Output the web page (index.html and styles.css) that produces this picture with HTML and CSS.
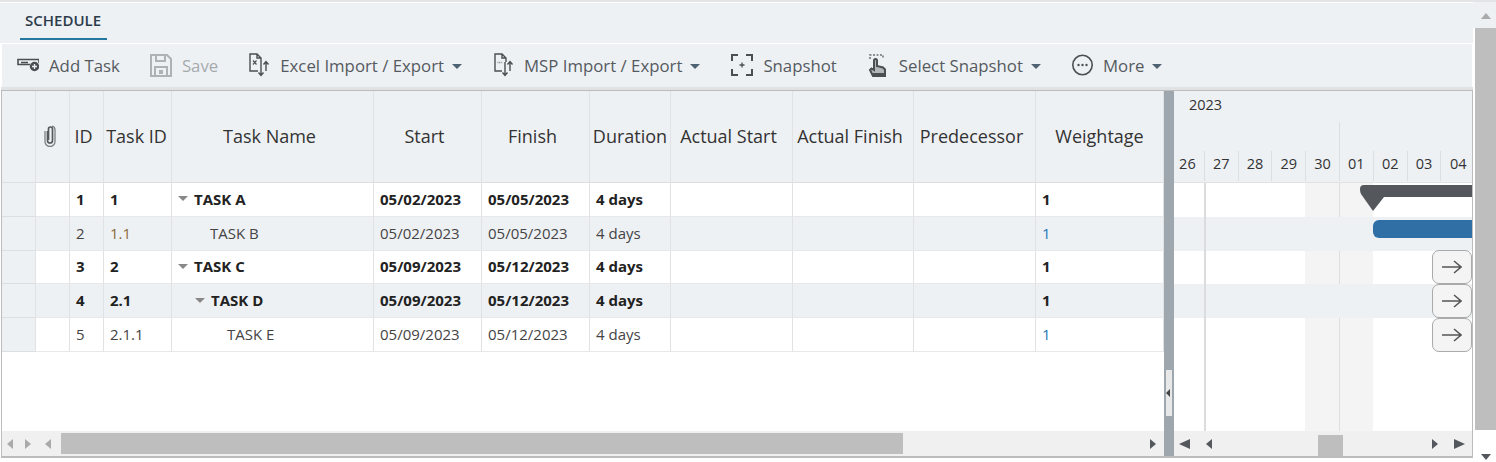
FILE: index.html
```html
<!DOCTYPE html>
<html>

<head>
  <title>Schedule</title>
  <link rel="stylesheet" href="styles.css">
</head>

<body>
  <div class="page">
    <div class="main">
      <div class="tabs"><span class="tab">SCHEDULE</span></div>

      <div class="toolbar">
        <span class="tool">
          <svg class="icon" viewBox="0 0 22 24"><path d="M13 11.500H1V6.500h21V10M4 9.500h7" fill="none" stroke="#4a4f54" stroke-width="1.600"/><circle cx="17.500" cy="13.500" r="4.700" fill="#4a4f54"/><path d="M15 13.500h5M17.500 11v5" stroke="#eef1f4" stroke-width="1.300"/></svg>
          Add Task
        </span>
        <span class="tool disabled">
          <svg class="icon" viewBox="0 0 22 24"><path d="M1 2h16l4 4v17H1z" fill="none" stroke="#aeb2b5" stroke-width="2"/><path d="M6 2v6h9V2M5 23v-9h12v9" fill="none" stroke="#aeb2b5" stroke-width="2"/><rect x="9" y="17" width="4" height="4" fill="#aeb2b5"/></svg>
          Save
        </span>
        <span class="tool">
          <svg class="icon" viewBox="0 0 22 24"><path d="M10 18H2V1h7l4 4v4M9 1v4h4" fill="none" stroke="#4a4f54" stroke-width="1.400"/><path d="M5 7.500l3.500 4M8.500 7.500L5 11.500" stroke="#4a4f54" stroke-width="1.200"/><path d="M13 9v13M10.500 19.500l2.500 3 2.500-3M18 18V9M15.500 11.500L18 8.500l2.500 3" fill="none" stroke="#4a4f54" stroke-width="1.400"/></svg>
          Excel Import / Export <i class="caret"></i>
        </span>
        <span class="tool">
          <svg class="icon" viewBox="0 0 22 24"><path d="M10 18H3V1h7l4 4v4M10 1v4h4" fill="none" stroke="#4a4f54" stroke-width="1.400"/><path d="M5.500 9.500h5" stroke="#8a8e92" stroke-width="1.600" stroke-dasharray="1 .6"/><path d="M13 9v13M10.500 19.500l2.500 3 2.500-3M18 18V9M15.500 11.500L18 8.500l2.500 3" fill="none" stroke="#4a4f54" stroke-width="1.400"/></svg>
          MSP Import / Export <i class="caret"></i>
        </span>
        <span class="tool snapshot">
          <svg class="icon" viewBox="0 0 22 24"><path d="M1 8V2h6M15 2h6v6M21 16v6h-6M7 22H1v-6" fill="none" stroke="#4a4f54" stroke-width="2"/><path d="M8.500 12h5M11 9.500v5" stroke="#4a4f54" stroke-width="1.300"/></svg>
          Snapshot
        </span>
        <span class="tool">
          <svg class="icon" viewBox="0 0 22 24"><path d="M3 6V2h13v4" fill="none" stroke="#8c9094" stroke-width="2" stroke-dasharray="2 1.500"/><path d="M5 21l-2-4 1.500-1.500L7 17V7.500a1.500 1.500 0 0 1 3 0V13l6 1.500 2 2V23H6z" fill="#b4b7ba" stroke="#4a4f54" stroke-width="2"/><path d="M6 20h12v3H6z" fill="#4a4f54"/></svg>
          Select Snapshot <i class="caret"></i>
        </span>
        <span class="tool">
          <svg class="icon" viewBox="0 0 22 24"><circle cx="11.500" cy="12" r="9.700" fill="none" stroke="#4a4f54" stroke-width="1.600"/><circle cx="7.500" cy="12" r="1.200" fill="#4a4f54"/><circle cx="11.500" cy="12" r="1.200" fill="#4a4f54"/><circle cx="15.500" cy="12" r="1.200" fill="#4a4f54"/></svg>
          More <i class="caret"></i>
        </span>
      </div>

      <div class="panes">
        <div class="left-pane">
          <div class="row head">
            <div></div>
            <div>
              <svg class="clip" viewBox="0 0 12 22"><path d="M3.500 6v9.500a2.500 2.500 0 0 0 5 0V4a2 2 0 0 0-4 0v11" fill="none" stroke="#55595d" stroke-width="1.700"/><path d="M1 6v10.500a5 5 0 0 0 10 0V4.500a3.500 3.500 0 0 0-3-3.300" fill="none" stroke="#7c8084" stroke-width="1.300"/></svg>
            </div>
            <div>ID</div>
            <div>Task ID</div>
            <div>Task Name</div>
            <div>Start</div>
            <div>Finish</div>
            <div>Duration</div>
            <div>Actual Start</div>
            <div>Actual Finish</div>
            <div>Predecessor</div>
            <div>Weightage</div>
          </div>

          <div class="row summary">
            <div class="rowhead"></div><div></div><div>1</div><div>1</div>
            <div class="name"><i class="tree"></i>TASK A</div>
            <div>05/02/2023</div><div>05/05/2023</div><div>4 days</div><div></div><div></div><div></div><div>1</div>
          </div>
          <div class="row alt">
            <div class="rowhead"></div><div></div><div>2</div><div class="wbs">1.1</div>
            <div class="name level1">TASK B</div>
            <div>05/02/2023</div><div>05/05/2023</div><div>4 days</div><div></div><div></div><div></div><div class="link">1</div>
          </div>
          <div class="row summary">
            <div class="rowhead"></div><div></div><div>3</div><div>2</div>
            <div class="name"><i class="tree"></i>TASK C</div>
            <div>05/09/2023</div><div>05/12/2023</div><div>4 days</div><div></div><div></div><div></div><div>1</div>
          </div>
          <div class="row summary alt">
            <div class="rowhead"></div><div></div><div>4</div><div>2.1</div>
            <div class="name level1-tree"><i class="tree"></i>TASK D</div>
            <div>05/09/2023</div><div>05/12/2023</div><div>4 days</div><div></div><div></div><div></div><div>1</div>
          </div>
          <div class="row">
            <div class="rowhead"></div><div></div><div>5</div><div>2.1.1</div>
            <div class="name level2">TASK E</div>
            <div>05/09/2023</div><div>05/12/2023</div><div>4 days</div><div></div><div></div><div></div><div class="link">1</div>
          </div>

          <div class="spacer"></div>

          <div class="hscroll left-scroll">
            <i class="arrow left off"></i>
            <i class="arrow right off"></i>
            <i class="arrow left off"></i>
            <span class="thumb"></span>
            <i class="arrow right"></i>
          </div>
        </div>

        <div class="splitter">
          <span class="handle"><i></i></span>
        </div>

        <div class="gantt">
          <div class="gantt-head">
            <div class="year">2023</div>
            <div class="month"></div>
            <div class="days">
              <span>26</span><span>27</span><span>28</span><span>29</span><span>30</span><span>01</span><span>02</span><span>03</span><span>04</span>
            </div>
          </div>

          <div class="gantt-body">
            <div class="weekend"></div>
            <div class="gantt-row"></div>
            <div class="gantt-row alt"></div>
            <div class="gantt-row"></div>
            <div class="gantt-row alt"></div>
            <div class="gantt-row"></div>
            <div class="today"></div>

            <div class="summary-bar"></div>
            <svg class="summary-tip" viewBox="0 0 26 27"><path d="M4 0H24V12L13 26 1 9Q0 7 0 4 0 0 4 0z" fill="#54575c"/></svg>
            <div class="task-bar"></div>
            <span class="goto first"><svg viewBox="0 0 20 14"><path d="M0 7h19M12 1l7 6-7 6" fill="none" stroke="#555" stroke-width="1.500"/></svg></span>
            <span class="goto second"><svg viewBox="0 0 20 14"><path d="M0 7h19M12 1l7 6-7 6" fill="none" stroke="#555" stroke-width="1.500"/></svg></span>
            <span class="goto third"><svg viewBox="0 0 20 14"><path d="M0 7h19M12 1l7 6-7 6" fill="none" stroke="#555" stroke-width="1.500"/></svg></span>
          </div>

          <div class="hscroll right-scroll">
            <i class="arrow left big"></i>
            <i class="arrow left"></i>
            <span class="thumb"></span>
            <i class="arrow right"></i>
            <i class="arrow right big"></i>
          </div>
        </div>
      </div>
    </div>

    <div class="vscroll">
      <i class="vup"></i>
      <span class="vthumb"></span>
      <i class="vdown"></i>
    </div>
  </div>
</body>

</html>
```

FILE: styles.css
```css
* {
  box-sizing: border-box;
}

html, body {
  margin: 0;
  height: 462px;
  overflow: hidden;
  background: #fff;
}

body {
  font-family: "Open Sans", "Liberation Sans", sans-serif;
  color: #333;
}

.page {
  display: flex;
  height: 462px;
  border-top: 2px solid #e2e4e6;
}

.main {
  width: 1473px;
  padding-top: 1px;
}

/* tab strip */
.tabs {
  height: 40px;
  background: #eef1f4;
  padding-left: 20px;
}

.tab {
  display: inline-block;
  height: 37px;
  width: 87px;
  padding: 7px 0 0 5px;
  font-size: 15px;
  font-weight: 600;
  color: #2c3b4a;
  border-bottom: 2px solid #24789f;
}

/* toolbar */
.toolbar {
  display: flex;
  align-items: center;
  gap: 30px;
  height: 45px;
  margin-left: 1px;
  padding: 0 0 2px 15px;
  background: #eef1f4;
  border: 1px solid #fff;
  border-bottom: 0;
}

.tool {
  display: flex;
  align-items: center;
  gap: 10px;
  font-size: 16.800px;
  color: #555a60;
  white-space: nowrap;
}

.tool.disabled {
  color: #a6aaae;
}

.tool.snapshot {
  margin-left: 1px;
}

.icon {
  width: 22px;
  height: 24px;
  flex: none;
}

.caret {
  width: 0;
  height: 0;
  margin-left: -2px;
  margin-top: 2px;
  border-left: 5px solid transparent;
  border-right: 5px solid transparent;
  border-top: 5px solid #4f6272;
}

/* grid */
.panes {
  display: flex;
  height: 368px;
  margin: 2px 0 0 1px;
  border: 1px solid #bcbcbc;
  border-width: 1px 1px 2px 1px;
  box-shadow: 0 -3px 0 #e0e2e4;
}

.left-pane {
  width: 1162px;
  display: flex;
  flex-direction: column;
}

.row {
  display: grid;
  grid-template-columns: 34px 34px 34px 68px 202px 108px 108px 81px 122px 121px 122px 128px;
  height: 33.800px;
  font-size: 15px;
  color: #444;
}

.row > div {
  display: flex;
  align-items: center;
  padding: 0 0 1px 6px;
  border-right: 1px solid #e0e2e4;
  border-bottom: 1px solid #e6e8ea;
  white-space: nowrap;
}

.row.head {
  height: 92px;
  background: #eef1f4;
  font-size: 18px;
  color: #333;
}

.row.head > div {
  justify-content: center;
  padding: 0 6px 2px 0;
  border-bottom-color: #dcdee0;
}

.row.head > div:nth-child(4) {
  padding-right: 2px;
}

.row.head > div:nth-child(8),
.row.head > div:nth-child(12) {
  padding-right: 0;
}

.row.alt {
  background: #eef1f4;
}

.row.summary {
  font-weight: 700;
  color: #222;
}

.row > .rowhead {
  background: #eef1f4;
  border-bottom-color: #dcdee0;
}

.row > .wbs {
  color: #8a6a3a;
}

.row > .link {
  color: #1f78b4;
}

.row > .level1 {
  padding-left: 38px;
}

.row > .level1-tree {
  padding-left: 23px;
}

.row > .level2 {
  padding-left: 55px;
}

.tree {
  width: 0;
  height: 0;
  margin-right: 6px;
  border-left: 5.500px solid transparent;
  border-right: 5.500px solid transparent;
  border-top: 5.500px solid #888;
}

.clip {
  width: 12px;
  height: 22px;
  margin-right: -1px;
}

.spacer {
  flex: 1;
}

/* scrollbars */
.hscroll {
  display: flex;
  align-items: center;
  height: 25px;
  background: #f0f0f0;
}

.thumb {
  flex: none;
  height: 21px;
  background: #bebebe;
}

.arrow {
  flex: none;
  width: 0;
  height: 0;
  border-top: 5.500px solid transparent;
  border-bottom: 5.500px solid transparent;
}

.left-scroll {
  padding-left: 5px;
}

.left-scroll .arrow:nth-child(1) {
  margin-right: 12px;
}

.left-scroll .arrow:nth-child(2) {
  margin-right: 14px;
}

.left-scroll .arrow:nth-child(3) {
  margin-right: 10px;
}

.left-scroll .thumb {
  width: 842px;
  margin-right: 247px;
}

.arrow.left {
  border-right: 6px solid #54575c;
}

.arrow.right {
  border-left: 6px solid #54575c;
}

.arrow.left.off {
  border-right-color: #aaa;
}

.arrow.right.off {
  border-left-color: #aaa;
}

.arrow.left.big {
  border-right-width: 11px;
}

.arrow.right.big {
  border-left-width: 11px;
}

.splitter {
  position: relative;
  width: 10px;
  background: #9ea6ae;
}

.handle {
  position: absolute;
  left: 2px;
  top: 279px;
  width: 6px;
  height: 46px;
  background: #e8e8e8;
  display: flex;
  align-items: center;
}

.handle i {
  width: 0;
  height: 0;
  border-top: 4px solid transparent;
  border-bottom: 4px solid transparent;
  border-right: 4px solid #444;
}

/* gantt */
.gantt {
  flex: 1;
  display: flex;
  flex-direction: column;
  min-width: 0;
}

.gantt-head {
  height: 91px;
  overflow: hidden;
  background: #eef1f4;
  font-size: 14.500px;
  color: #333;
}

.year {
  height: 31px;
  padding: 4px 0 0 15px;
}

.month {
  height: 29px;
  margin-left: 165px;
  border-left: 1px solid #dcdee0;
}

.days {
  display: flex;
  height: 30px;
  margin-left: -3px;
}

.days span {
  flex: none;
  width: 33.800px;
  padding-top: 3px;
  text-align: center;
  border-right: 1px solid #dcdee0;
}

.days span:last-child {
  border-right: 0;
}

.gantt-body {
  position: relative;
  flex: 1;
  overflow: hidden;
  border-top: 1px solid #e0e2e4;
}

.gantt-row {
  height: 33.800px;
}

.gantt-row.alt {
  position: relative;
  background: #eef1f4;
}

.weekend {
  position: absolute;
  left: 131px;
  top: 0;
  bottom: 0;
  width: 68px;
  background: linear-gradient(#dcdee0, #dcdee0) 34px 0 / 1px 100% no-repeat #f4f4f4;
}

.today {
  position: absolute;
  left: 30px;
  top: 0;
  bottom: 0;
  width: 2px;
  background: #dcdcdc;
}

.summary-bar {
  position: absolute;
  left: 195px;
  right: 0;
  top: 2px;
  height: 12px;
  background: #54575c;
}

.summary-tip {
  position: absolute;
  left: 186px;
  top: 2px;
  width: 26px;
  height: 27px;
}

.task-bar {
  position: absolute;
  left: 199px;
  right: 0;
  top: 37px;
  height: 18px;
  background: #306fa5;
  border-radius: 6px 0 0 6px;
}

.goto {
  position: absolute;
  left: 258px;
  width: 40px;
  height: 34px;
  display: flex;
  align-items: center;
  justify-content: center;
  background: #f4f4f4;
  border: 1px solid #aaa;
  border-radius: 7px;
}

.goto svg {
  width: 20px;
  height: 14px;
}

.goto.first {
  top: 67px;
}

.goto.second {
  top: 101px;
}

.goto.third {
  top: 135px;
}

.right-scroll {
  padding-left: 5px;
}

.right-scroll .arrow:nth-child(1) {
  margin-right: 16px;
}

.right-scroll .arrow:nth-child(2) {
  margin-right: 106px;
}

.right-scroll .thumb {
  width: 25px;
  margin-right: 89px;
  align-self: flex-end;
}

.right-scroll .arrow:nth-child(4) {
  margin-right: 16px;
}

/* page scrollbar */
.vscroll {
  position: relative;
  width: 23px;
  padding-left: 2px;
  background: linear-gradient(#eef1f4 26px, #fff 26px);
}

.vthumb {
  display: block;
  margin-top: 26px;
  height: 402px;
  background: #bebebe;
}

.vup, .vdown {
  position: absolute;
  right: 5px;
  width: 0;
  height: 0;
  border-left: 5.500px solid transparent;
  border-right: 5.500px solid transparent;
}

.vup {
  top: 11px;
  border-bottom: 6px solid #aaa;
}

.vdown {
  top: 452px;
  border-top: 6px solid #54575c;
}
```
